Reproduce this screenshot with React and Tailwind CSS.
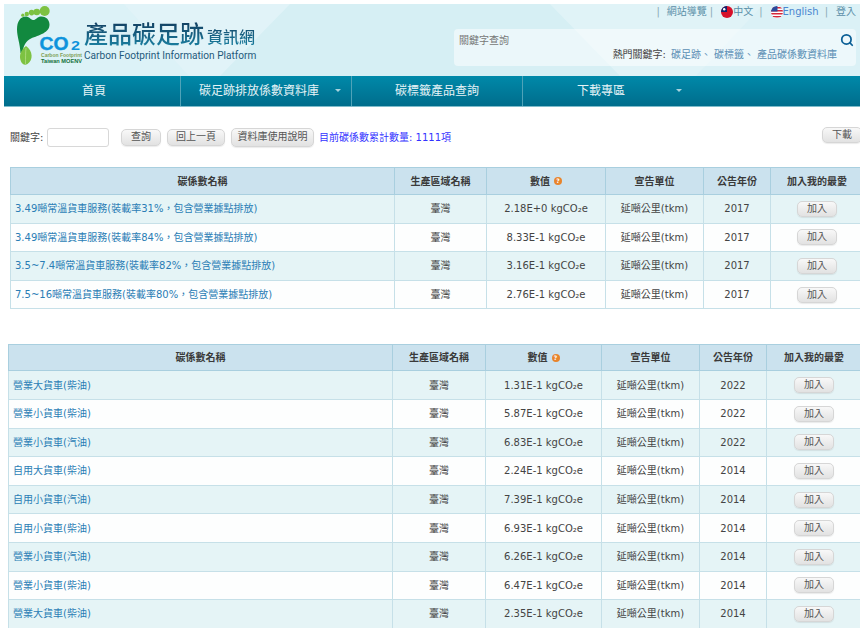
import { Search } from 'lucide-react';

const font = 'font-["DejaVu_Sans","Noto_Sans_CJK_TC",sans-serif]';

const rows1 = [
    ['3.49噸常溫貨車服務(裝載率31%\uFF0C包含營業據點排放)', '2.18E+0 kgCO₂e', '2017'],
    ['3.49噸常溫貨車服務(裝載率84%\uFF0C包含營業據點排放)', '8.33E-1 kgCO₂e', '2017'],
    ['3.5~7.4噸常溫貨車服務(裝載率82%\uFF0C包含營業據點排放)', '3.16E-1 kgCO₂e', '2017'],
    ['7.5~16噸常溫貨車服務(裝載率80%\uFF0C包含營業據點排放)', '2.76E-1 kgCO₂e', '2017'],
];

const rows2 = [
    ['營業大貨車(柴油)', '1.31E-1 kgCO₂e', '2022'],
    ['營業小貨車(柴油)', '5.87E-1 kgCO₂e', '2022'],
    ['營業小貨車(汽油)', '6.83E-1 kgCO₂e', '2022'],
    ['自用大貨車(柴油)', '2.24E-1 kgCO₂e', '2014'],
    ['自用小貨車(汽油)', '7.39E-1 kgCO₂e', '2014'],
    ['自用小貨車(柴油)', '6.93E-1 kgCO₂e', '2014'],
    ['營業小貨車(汽油)', '6.26E-1 kgCO₂e', '2014'],
    ['營業小貨車(柴油)', '6.47E-1 kgCO₂e', '2014'],
    ['營業大貨車(柴油)', '2.35E-1 kgCO₂e', '2014'],
];

// 座標與頁面一致 (viewBox 從 4,4 開始)
function Logo() {
    return (
        <svg width="80" height="66" viewBox="4 4 80 66" className="shrink-0">
            {/* 腳趾 */}
            <circle cx="44.7" cy="11" r="5" fill="#7dc242" />
            <circle cx="36.8" cy="12" r="3.3" fill="#7dc242" />
            <circle cx="31.6" cy="12.6" r="2.8" fill="#7dc242" />
            <circle cx="26.8" cy="14" r="2.2" fill="#7dc242" />
            <circle cx="22.8" cy="15.2" r="1.6" fill="#7dc242" />
            {/* 腳掌 */}
            <path d="M26 16.5C20 16.5 17 22 17 29C17 37 20 43 20.5 53L22.5 53C23 46 26 41 31 38.5C39 35 49.5 33 49.5 24.5C49.5 19 45 16 40.5 16.5C37 17 35.5 20.5 33 20C30.5 19.5 29 16.5 26 16.5Z" fill="#12893f" />
            {/* 葉子 */}
            <path d="M26 46C21 50 18.5 55 21 61.5C22 64.5 25 65.5 27.5 64C33.5 60 33 51 26 46Z" fill="#7dc242" />
            <path d="M26 48C25.5 53 25.5 58 25.5 64" stroke="#c5e59a" strokeWidth="0.6" fill="none" />
            <text x="39.5" y="50" fontSize="18" fontWeight="700" fill="#0d93dc" stroke="#0d93dc" strokeWidth="0.4" fontFamily="Liberation Sans, sans-serif" textLength="29" lengthAdjust="spacingAndGlyphs">CO</text>
            <text x="71" y="50" fontSize="13" fontWeight="700" fill="#0d93dc" fontFamily="Liberation Sans, sans-serif" textLength="9" lengthAdjust="spacingAndGlyphs">2</text>
            <text x="41" y="56.5" fontSize="4.6" fontWeight="700" fill="#7f9f55" fontFamily="Liberation Sans, sans-serif" textLength="41" lengthAdjust="spacingAndGlyphs">Carbon Footprint</text>
            <text x="41" y="63" fontSize="5.2" fontWeight="700" fill="#14713a" fontFamily="Liberation Sans, sans-serif" textLength="41" lengthAdjust="spacingAndGlyphs">Taiwan MOENV</text>
        </svg>
    );
}

function HeaderBackground() {
    return (
        <svg width="856" height="72" viewBox="0 0 856 72" className="absolute inset-0">
            <polygon points="0,0 286,0 216,72 0,72" fill="#e1f3f8" />
            <polygon points="0,0 120,0 185,72 0,72" fill="#d8f0f5" opacity="0.55" />
            <polygon points="546,0 856,0 856,72 616,72" fill="#e0f3f7" />
            <polygon points="692,72 760,0 856,0 856,72" fill="#d8f0f5" opacity="0.7" />
        </svg>
    );
}

function TwFlag() {
    return (
        <svg width="12" height="12" viewBox="0 0 12 12" className="shrink-0">
            <circle cx="6" cy="6" r="6" fill="#d6102a" />
            <path d="M6 0A6 6 0 0 0 0 6H6Z" fill="#10246e" />
            <circle cx="3.2" cy="3.2" r="1.2" fill="#fff" />
        </svg>
    );
}

function UsFlag() {
    return (
        <svg width="12" height="12" viewBox="0 0 12 12" className="shrink-0">
            <clipPath id="usclip"><circle cx="6" cy="6" r="6" /></clipPath>
            <g clipPath="url(#usclip)">
                <rect width="12" height="12" fill="#fff" />
                <rect y="1" width="12" height="1.5" fill="#d6283a" />
                <rect y="4" width="12" height="1.5" fill="#d6283a" />
                <rect y="7" width="12" height="1.5" fill="#d6283a" />
                <rect y="10" width="12" height="1.5" fill="#d6283a" />
                <rect width="6.5" height="5.5" fill="#2a4a9c" />
            </g>
        </svg>
    );
}

function GrayButton({ className, children }) {
    return (
        <button className={`rounded-[5px] border border-[#d6d6d6] bg-gradient-to-b from-[#f8f8f8] to-[#e2e2e2] text-[#555] text-[10px] leading-none shadow-[0_1px_1px_rgba(0,0,0,0.08)] ${className}`}>
            {children}
        </button>
    );
}

function NavItem({ label, width, caret, border, caretClass }) {
    return (
        <div className={`relative flex h-full items-center justify-center ${width} ${border ? 'border-r border-[#4fa3b8]' : ''}`}>
            <span className="text-[12px] text-[#e6f4f7]">{label}</span>
            {caret && <span className={`absolute top-[13px] h-0 w-0 border-x-[3.5px] border-t-[3.5px] border-x-transparent border-t-[#a9d3de] ${caretClass}`} />}
        </div>
    );
}

function CarbonTable({ rows, widths, className, headerHeight }) {
    const cell = 'border border-[#c6e0e8] text-center font-normal';
    const head = 'border border-[#a9cfdf] text-center text-[10px] font-bold text-[#3a3a3a]';
    return (
        <table className={`table-fixed border-collapse text-[10px] text-[#444] ${widths.w} ${className}`}>
            <colgroup>
                {widths.cols.map((c, i) => <col key={i} className={c} />)}
            </colgroup>
            <thead>
                <tr className={`bg-[#cbe2ee] ${headerHeight}`}>
                    <th className={head}>碳係數名稱</th>
                    <th className={head}>生產區域名稱</th>
                    <th className={head}>
                        <span className="inline-flex items-center gap-[4px]">
                            數值
                            <span className="flex h-[8px] w-[8px] items-center justify-center rounded-full bg-[#e8842c] text-[6px] font-bold leading-none text-white">?</span>
                        </span>
                    </th>
                    <th className={head}>宣告單位</th>
                    <th className={head}>公告年份</th>
                    <th className={head}>加入我的最愛</th>
                </tr>
            </thead>
            <tbody>
                {rows.map((r, i) => (
                    <tr key={i} className={`h-[28.6px] ${i % 2 === 0 ? 'bg-[#e5f4f6]' : 'bg-[#fdfefe]'}`}>
                        <td className="border border-[#c6e0e8] pl-[4px] text-left text-[10px] text-[#2a7db5]">{r[0]}</td>
                        <td className={cell}>臺灣</td>
                        <td className={cell}>{r[1]}</td>
                        <td className={cell}>延噸公里(tkm)</td>
                        <td className={cell}>{r[2]}</td>
                        <td className={cell}>
                            <GrayButton className="h-[16px] w-[40px] text-[9px]">加入</GrayButton>
                        </td>
                    </tr>
                ))}
            </tbody>
        </table>
    );
}

export default function App() {
    return (
        <div className={`h-[628px] w-[860px] overflow-hidden bg-white ${font}`}>
            {/* 頁首 */}
            <div className="relative ml-[4px] mt-[4px] h-[72px] bg-[#d6eff4]">
                <HeaderBackground />
                <div className="relative flex h-full">
                    <Logo />
                    <div className="mt-[16px] flex w-[180px] flex-col">
                        <div className="flex items-end bg-gradient-to-b from-[#123a5c] to-[#1a7fa0] bg-clip-text font-['Noto_Sans_CJK_TC',sans-serif] leading-none text-transparent">
                            <span className="text-[24px] font-medium leading-[26px]">產品碳足跡</span>
                            <span className="ml-[3px] text-[16px] font-medium leading-[20px]">資訊網</span>
                        </div>
                        <span className="mt-[3px] whitespace-nowrap font-['Roboto',sans-serif] text-[10.1px] leading-[14px] text-[#1f5a7c]">Carbon Footprint Information Platform</span>
                    </div>
                    <div className="ml-[190px] flex w-[402px] flex-col">
                        <div className="mt-[1px] flex h-[14px] items-center justify-end whitespace-nowrap text-[10px] leading-none text-[#5a8fa8]">
                            <span className="mr-[7px] text-[#8aa9b5]">|</span>
                            <span className="mr-[3px]">網站導覽</span>
                            <span className="mr-[8px] text-[#8aa9b5]">|</span>
                            <span className="mr-[6px] flex items-center">
                                <TwFlag />
                                <span>中文</span>
                            </span>
                            <span className="mr-[8px] text-[#8aa9b5]">|</span>
                            <span className="mr-[6px] flex items-center text-[#4a86d0]">
                                <UsFlag />
                                <span>English</span>
                            </span>
                            <span className="mr-[8px] text-[#8aa9b5]">|</span>
                            <span>登入</span>
                        </div>
                        <div className="relative mt-[10px] h-[37px] rounded-[4px] bg-white/50 text-[10px] leading-none">
                            <span className="absolute left-[5px] top-[7px] text-[#777]">關鍵字查詢</span>
                            <Search className="absolute right-[2px] top-[4px] h-[14px] w-[14px] text-[#0b5f96]" strokeWidth={3} />
                            <div className="absolute right-[19px] top-[21px] flex gap-[3px] whitespace-nowrap">
                                <span className="mr-[2px] text-[#444]">熱門關鍵字:</span>
                                <span className="text-[#5b8fb5]">碳足跡、</span>
                                <span className="text-[#5b8fb5]">碳標籤、</span>
                                <span className="text-[#5b8fb5]">產品碳係數資料庫</span>
                            </div>
                        </div>
                    </div>
                </div>
            </div>

            {/* 導覽列 */}
            <div className="ml-[4px] flex h-[31px] border-b border-[#7fbccb] bg-gradient-to-b from-[#0089a9] to-[#006d8c]">
                <NavItem label="首頁" width="w-[177px] pl-[4px]" border />
                <NavItem label="碳足跡排放係數資料庫" width="w-[171px] pr-[14px]" caret caretClass="right-[10px]" border />
                <NavItem label="碳標籤產品查詢" width="w-[171px]" border />
                <NavItem label="下載專區" width="w-[172px] pr-[16px]" caret caretClass="right-[13px]" />
            </div>

            {/* 查詢列 */}
            <div className="ml-[10px] mt-[20px] flex h-[20px] w-[852px] items-center text-[10px] text-[#444]">
                <span className="w-[37px] shrink-0 whitespace-nowrap">關鍵字:</span>
                <input className="h-[19px] w-[62px] rounded-[3px] border border-[#d8d8d8] bg-white" />
                <GrayButton className="ml-[12px] h-[17px] w-[40px]">查詢</GrayButton>
                <GrayButton className="ml-[6px] h-[17px] w-[58px]">回上一頁</GrayButton>
                <GrayButton className="ml-[6px] h-[19px] w-[83px] text-[#2f6f9a]">資料庫使用說明</GrayButton>
                <span className="ml-[5px] whitespace-nowrap text-[10px] text-[#3333ff]">目前碳係數累計數量: 1111項</span>
                <GrayButton className="ml-auto h-[16px] w-[40px] shrink-0 self-start">下載</GrayButton>
            </div>

            {/* 表格 */}
            <CarbonTable
                rows={rows1}
                className="ml-[10px] mt-[20px]"
                headerHeight="h-[27px]"
                widths={{ w: 'w-[853px]', cols: ['w-[384px]', 'w-[92px]', 'w-[119px]', 'w-[98px]', 'w-[67px]', 'w-[93px]'] }}
            />
            <CarbonTable
                rows={rows2}
                className="ml-[8px] mt-[35px]"
                headerHeight="h-[26px]"
                widths={{ w: 'w-[853px]', cols: ['w-[384px]', 'w-[93px]', 'w-[116px]', 'w-[98px]', 'w-[67px]', 'w-[95px]'] }}
            />
        </div>
    );
}
